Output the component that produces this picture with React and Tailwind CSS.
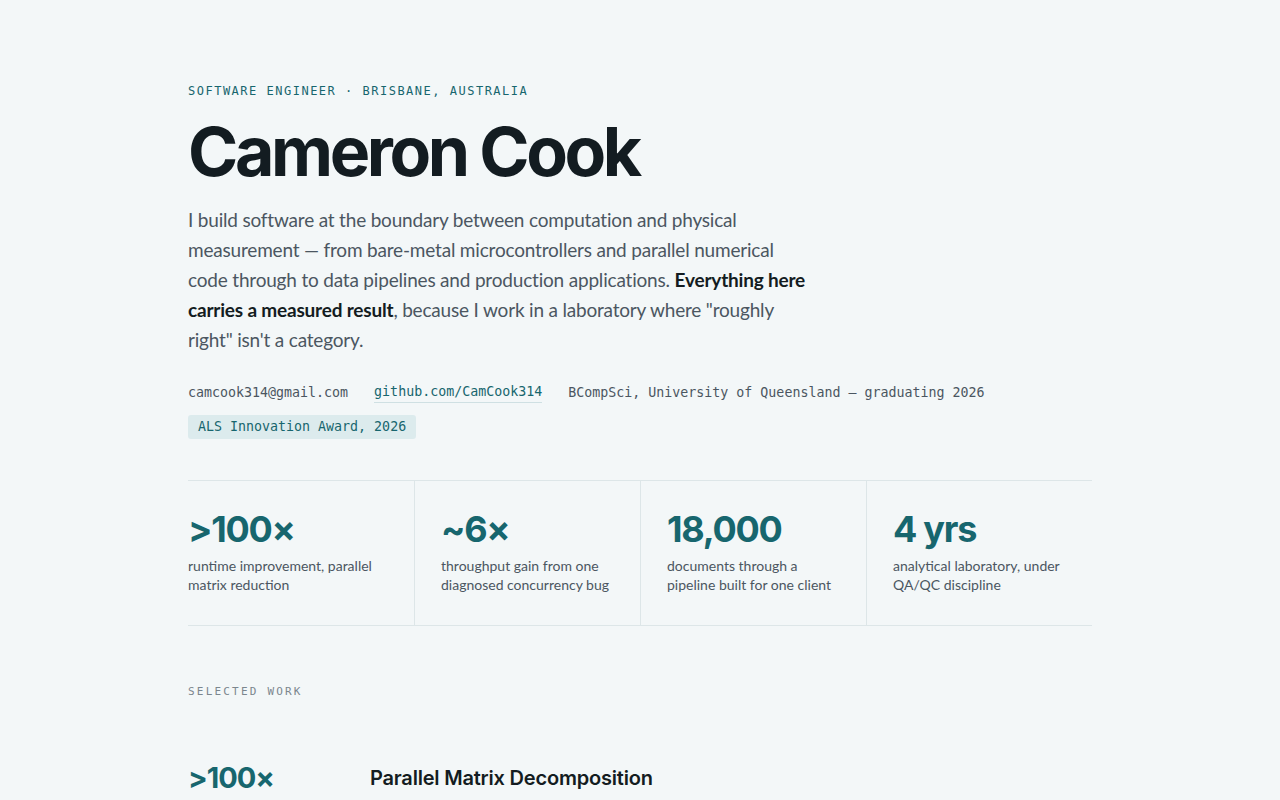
const stats = [
  { value: '>100×', label: 'runtime improvement, parallel matrix reduction' },
  { value: '~6×', label: 'throughput gain from one diagnosed concurrency bug' },
  { value: '18,000', label: 'documents through a pipeline built for one client' },
  { value: '4 yrs', label: 'analytical laboratory, under QA/QC discipline' },
];

const mono = "font-['DejaVu_Sans_Mono','Liberation_Mono',monospace]";
const head = "font-['Inter','Liberation_Sans',sans-serif]";

export default function App() {
  return (
    <div className="min-h-screen bg-[#f3f7f8] font-['Lato','Noto_Sans',sans-serif]">
      <main className="mx-auto w-[904px] pt-[83px]">
        {/* Intro */}
        <p className={`${mono} text-[12px] leading-[16px] tracking-[0.125em] text-[#17666e] font-medium`}>
          SOFTWARE ENGINEER · BRISBANE, AUSTRALIA
        </p>
        <h1 className={`${head} mt-[18px] text-[68px] leading-[68px] font-bold tracking-[-0.05em] text-[#131c21]`}>
          Cameron Cook
        </h1>
        <p className="mt-[20px] w-[628px] text-[19px] leading-[30px] tracking-[-0.01em] text-[#4b5661]">
          I build software at the boundary between computation and physical measurement — from
          bare-metal microcontrollers and parallel numerical code through to data pipelines and
          production applications.{' '}
          <strong className="font-bold text-[#131c21]">Everything here carries a measured result</strong>,
          because I work in a laboratory where "roughly right" isn't a category.
        </p>

        <div className={`${mono} mt-[27px] flex items-center gap-[26px] text-[13.3px] leading-[20px] text-[#4b5661]`}>
          <span>camcook314@gmail.com</span>
          <a className="border-b border-[#cfe0e3] text-[#17666e]">github.com/CamCook314</a>
          <span>BCompSci, University of Queensland — graduating 2026</span>
        </div>
        <div className="mt-[12px] flex">
          <span className={`${mono} rounded-[3px] bg-[#dcebed] px-[10px] py-[4px] text-[13.3px] leading-[16px] text-[#17666e]`}>
            ALS Innovation Award, 2026
          </span>
        </div>

        {/* Stats */}
        <div className="mt-[41px] grid grid-cols-4 border-y border-[#dde6e8]">
          {stats.map((s, i) => (
            <div
              key={s.value}
              className={
                i === 0
                  ? 'pt-[26px] pb-[31px] pr-[26px]'
                  : 'border-l border-[#dde6e8] pt-[26px] pb-[31px] pl-[26px] pr-[26px]'
              }
            >
              <div className={`${head} text-[36px] leading-[44px] font-bold tracking-[-0.035em] text-[#17666e]`}>
                {s.value}
              </div>
              <p className="mt-[5px] text-[14px] leading-[19px] text-[#4b5661]">{s.label}</p>
            </div>
          ))}
        </div>

        {/* Selected work */}
        <p className={`${mono} mt-[58px] text-[11px] leading-[16px] tracking-[0.2em] text-[#7b868e]`}>
          SELECTED WORK
        </p>
        <div className="mt-[60px] flex items-center">
          <div className={`${head} w-[182px] text-[29px] leading-[36px] font-bold tracking-[-0.035em] text-[#17666e]`}>
            &gt;100×
          </div>
          <h2 className={`${head} text-[20px] leading-[28px] font-semibold tracking-[-0.01em] text-[#131c21]`}>
            Parallel Matrix Decomposition
          </h2>
        </div>
      </main>
    </div>
  );
}
